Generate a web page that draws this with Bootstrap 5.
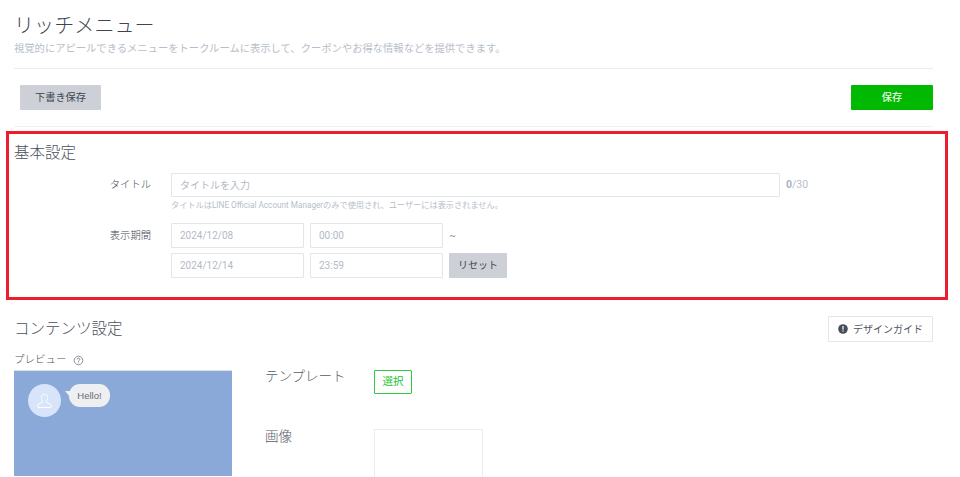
<!DOCTYPE html>
<html lang="ja">
<head>
<meta charset="utf-8">
<title>リッチメニュー</title>
<link rel="stylesheet" href="https://cdn.jsdelivr.net/npm/bootstrap@5.3.0/dist/css/bootstrap.min.css">
<style>
html,body{height:477px;overflow:hidden;background:#fff}
body{font-family:Roboto,"Noto Sans CJK JP",sans-serif;color:#49505c;font-size:11px;line-height:1.3}
.pagewrap{padding:0 27px 0 14px}
.page-ttl{font-size:20px;line-height:26px;font-weight:300;color:#3f4550;margin:0;padding-top:13px;letter-spacing:.1px}
.page-sub{font-size:10.3px;line-height:14px;color:#b7bec9;margin:3px 0 0 0}
.rule1{height:1px;background:#e9ebee;margin-top:12px}
.actions{padding:16px 0 16px 6px;border-bottom:1px solid #f1f2f4}
.btn-draft,.btn-save,.btn-reset{border:0;border-radius:1px;font-size:10.2px;height:25px;display:flex;align-items:center;justify-content:center;padding:0}
.btn-draft{width:81px;background:#cdd1d7;color:#3f4550}
.btn-save{width:82px;background:#00b900;color:#eaf9ea;font-weight:500}
.redbox{border:3px solid #ed1c2e;margin:4px -15px 0 -8px;height:169px;padding:0 0 0 5px}
.sec-ttl{font-size:15.5px;line-height:22px;font-weight:300;color:#4a505b;margin:0}
.redbox .sec-ttl{padding-top:8px}
.title-row{margin-top:9px}
.lab{width:137px;text-align:right;font-size:10.3px;font-weight:300;color:#3f4550;flex:none}
.fld{border:1px solid #e3e5e9;border-radius:1px;height:25px;background:#fff;color:#b3bac6;font-size:10px;padding:0 8px;display:flex;align-items:center}
.fld-title{width:609px;height:24px}
.fld-date{width:133px}
.count{font-size:10.5px;color:#b7bec9;margin-left:6px}
.count b{font-weight:700;color:#a9b1be}
.hint{font-size:8.2px;color:#b7bec9;margin:1px 0 0 0;line-height:14px;padding-left:157px}
.datecol{padding-left:20px;gap:6px}
.date-row1{margin-top:11px}
.date-row2{margin-top:5px;padding-left:137px}
.btn-reset{width:58px;background:#cdd1d7;color:#3f4550;font-size:10px}
.tilde{font-size:10px;color:#8a909b}
.contents-head{margin-top:16px;align-items:center;height:26px}
.btn-guide{width:105px;height:26px;background:#fff;border:1px solid #e3e5e9;border-radius:1px;font-size:10px;color:#4f5561;padding:0}
.dot{width:10px;height:10px;margin-right:1px}
.prevlab{font-size:10.5px;font-weight:300;color:#4f5561;line-height:14px;margin-top:11px;gap:6px}
.phone{width:218px;height:106px;background:#8ba9d8;margin-top:3px;padding:13px 14px;border-top:1px solid #d7dfec;gap:8px;flex:none}
.avatar{width:33px;height:33px;background:#d7e4fa;border-radius:50%;flex:none}
.bubble{height:23px;width:41px;background:#eeeff1;border-radius:11px;color:#666c76;font-size:9.5px;text-align:center;line-height:23px;position:relative;font-family:"Liberation Sans",sans-serif}
.bubble::before{content:"";position:absolute;left:-4px;top:7px;border:solid transparent;border-width:0 5px 6px 0;border-right-color:#eeeff1}
.formcol{margin-left:33px}
.flab{font-size:13.5px;color:#555b66;width:109px;line-height:18px;flex:none;font-weight:300}
.tmpl-row{margin-top:25px}
.img-row{margin-top:33px}
.btn-pick{width:38px;height:24px;background:#fff;border:1px solid #2fc93f;border-radius:1px;color:#22c233;font-size:10.5px;padding:0;margin-top:3px}
.imgbox{width:109px;height:48px;border:1px solid #ebecef;border-bottom:0;margin-top:2px}
</style>
</head>
<body>
<div class="pagewrap">
  <h1 class="page-ttl">リッチメニュー</h1>
  <p class="page-sub">視覚的にアピールできるメニューをトークルームに表示して、クーポンやお得な情報などを提供できます。</p>
  <div class="rule1"></div>
  <div class="actions d-flex justify-content-between">
    <button class="btn-draft" type="button">下書き保存</button>
    <button class="btn-save" type="button">保存</button>
  </div>
  <section class="redbox">
    <h2 class="sec-ttl">基本設定</h2>
    <div class="title-row d-flex align-items-center">
      <div class="lab">タイトル</div>
      <div class="datecol d-flex"><div class="fld fld-title">タイトルを入力</div></div>
      <div class="count"><b>0</b>/30</div>
    </div>
    <p class="hint">タイトルはLINE Official Account Managerのみで使用され、ユーザーには表示されません。</p>
    <div class="date-row1 d-flex align-items-center">
      <div class="lab">表示期間</div>
      <div class="datecol d-flex align-items-center">
        <div class="fld fld-date">2024/12/08</div>
        <div class="fld fld-date">00:00</div>
        <div class="tilde">~</div>
      </div>
    </div>
    <div class="date-row2 d-flex align-items-center">
      <div class="datecol d-flex align-items-center">
        <div class="fld fld-date">2024/12/14</div>
        <div class="fld fld-date">23:59</div>
        <button class="btn-reset" type="button">リセット</button>
      </div>
    </div>
  </section>
  <div class="contents-head d-flex justify-content-between">
    <h2 class="sec-ttl">コンテンツ設定</h2>
    <button class="btn-guide d-flex align-items-center justify-content-center gap-1" type="button">
      <svg class="dot" viewBox="0 0 10 10"><circle cx="5" cy="5" r="4.8" fill="#474e5b"/><rect x="4.4" y="2" width="1.2" height="3.6" fill="#fff"/><rect x="4.4" y="6.4" width="1.2" height="1.2" fill="#fff"/></svg>
      デザインガイド
    </button>
  </div>
  <div class="d-flex">
    <div>
      <div class="prevlab d-flex align-items-center">プレビュー
        <svg width="11" height="11" viewBox="0 0 11 11"><circle cx="5.5" cy="5.5" r="4.3" fill="none" stroke="#7d838e" stroke-width=".9"/><path d="M4.2 4.4a1.3 1.3 0 1 1 1.9 1.2c-.4.2-.6.5-.6.9" fill="none" stroke="#7d838e" stroke-width=".9"/><rect x="5.1" y="7.4" width=".9" height=".9" fill="#7d838e"/></svg>
      </div>
      <div class="phone d-flex align-items-start">
        <div class="avatar d-flex align-items-center justify-content-center">
          <svg width="15" height="16" viewBox="0 0 15 16"><path d="M7.5 1.2c-2 0-3.3 1.5-3.3 3.4 0 1.4.6 2.600 1.500 3.300v1.300L1.600 11.300c-.4.2-.6.5-.6.9v2.400h13v-2.400c0-.4-.2-.7-.6-.9L9.300 9.200V7.900c.9-.7 1.500-1.900 1.500-3.300 0-1.900-1.300-3.400-3.300-3.400z" fill="none" stroke="#fff" stroke-width="1"/></svg>
        </div>
        <div class="bubble">Hello!</div>
      </div>
    </div>
    <div class="formcol">
      <div class="tmpl-row d-flex align-items-start">
        <div class="flab">テンプレート</div>
        <button class="btn-pick" type="button">選択</button>
      </div>
      <div class="img-row d-flex align-items-start">
        <div class="flab">画像</div>
        <div class="imgbox"></div>
      </div>
    </div>
  </div>
</div>
<script src="https://cdn.jsdelivr.net/npm/bootstrap@5.3.0/dist/js/bootstrap.bundle.min.js"></script>
</body>
</html>
